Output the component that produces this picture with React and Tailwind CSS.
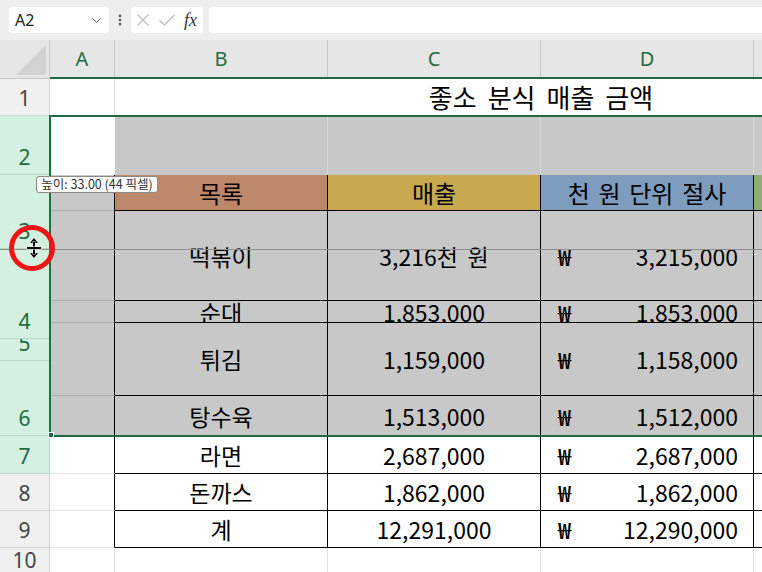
import { ChevronDown, EllipsisVertical } from 'lucide-react'

const KR = "font-['Noto_Sans_CJK_KR','Noto_Sans',sans-serif]"

const rowHeads = [
  { h: 'h-[37px]', label: '1' },
  { h: 'h-[59px]', label: '2', sel: true },
  { h: 'h-[74px]', label: '3', sel: true },
  { h: 'h-[90px]', label: '4', sel: true },
  { h: 'h-[22px]', label: '5', sel: true },
  { h: 'h-[75px]', label: '6', sel: true },
  { h: 'h-[38px]', label: '7', sel: true },
  { h: 'h-[37px]', label: '8' },
  { h: 'h-[37px]', label: '9' },
  { h: 'h-[30px]', label: '10' },
]

const items = [
  { h: 'h-[90px]', name: '떡볶이', sales: '3,216천 원', cut: '3,215,000', sel: true },
  { h: 'h-[22px]', name: '순대', sales: '1,853,000', cut: '1,853,000', sel: true },
  { h: 'h-[73px]', name: '튀김', sales: '1,159,000', cut: '1,158,000', sel: true },
  { h: 'h-[40px]', name: '탕수육', sales: '1,513,000', cut: '1,512,000', sel: true },
  { h: 'h-[38px]', name: '라면', sales: '2,687,000', cut: '2,687,000' },
  { h: 'h-[37px]', name: '돈까스', sales: '1,862,000', cut: '1,862,000' },
  { h: 'h-[37px]', name: '계', sales: '12,291,000', cut: '12,290,000' },
]

function RowHead({ h, label, sel }) {
  return (
    <div
      className={`${h} shrink-0 flex items-end justify-center overflow-hidden border-b border-r pb-[4px] text-[21px] leading-[26px] ${
        sel
          ? 'bg-[#d3f0e0] text-[#1e6b41] border-[#b6d8c4]'
          : 'bg-[#f0f0f0] text-[#444] border-[#d2d2d2]'
      }`}
    >
      {label}
    </div>
  )
}

function Cell({ w = 'w-[213px]', cls = '', children }) {
  return (
    <div className={`${w} shrink-0 flex items-center justify-center overflow-hidden ${cls}`}>
      {children}
    </div>
  )
}

function Toolbar() {
  return (
    <div className="h-[40px] bg-[#eeeeee] flex items-center pl-[9px] font-['Noto_Sans',sans-serif]">
      {/* Name box */}
      <div className="w-[100px] h-[26px] bg-white rounded-[4px] flex items-center justify-between pl-[6px] pr-[5px]">
        <span className="text-[16px] text-[#222]">A2</span>
        <ChevronDown size={15} strokeWidth={1.6} className="text-[#555]" />
      </div>
      <div className="w-[22px] flex justify-center">
        <EllipsisVertical size={14} strokeWidth={2.5} className="text-[#555]" />
      </div>
      {/* cancel / enter / fx */}
      <div className="w-[72px] h-[26px] bg-white rounded-[4px] flex items-center pl-[6px]">
        <svg width="12" height="12" viewBox="0 0 12 12" className="shrink-0">
          <path d="M0.5 0.5 L11.5 11.5 M11.5 0.5 L0.5 11.5" stroke="#bcbcbc" strokeWidth="1.2" fill="none" />
        </svg>
        <svg width="16" height="12" viewBox="0 0 16 12" className="ml-[10px] shrink-0">
          <path d="M0.5 6.5 L5.5 11 L15.5 1" stroke="#bcbcbc" strokeWidth="1.2" fill="none" />
        </svg>
        <span className="ml-[9px] text-[18px] italic text-[#333] font-['Liberation_Serif',serif] leading-none">
          fx
        </span>
      </div>
      <div className="ml-[6px] flex-1 h-[26px] bg-white rounded-l-[4px]" />
    </div>
  )
}

export default function App() {
  const GRID = 'border-[#e1e1e1]'
  return (
    <div className={`relative w-[762px] h-[572px] overflow-hidden bg-white ${KR}`}>
      <Toolbar />

      <div className="flex">
        {/* Row headers */}
        <div className="w-[50px] shrink-0 flex flex-col font-['Noto_Sans',sans-serif]">
          <div className="h-[39px] shrink-0 bg-[#e6e6e6] border-r border-b border-[#c8c8c8] relative">
            <svg width="50" height="39" viewBox="0 0 50 39" className="absolute left-0 top-0">
              <polygon points="16,35 46,35 46,5" fill="#d2d2d2" />
            </svg>
          </div>
          {rowHeads.map((r) => (
            <RowHead key={r.label} {...r} />
          ))}
        </div>

        {/* Cells */}
        <div className="flex-1 min-w-0 overflow-hidden flex flex-col">
          {/* Column headers */}
          <div className="h-[39px] shrink-0 flex bg-[#e6e6e6] border-b-2 border-[#1f6b43] text-[20px] text-[#1e6b41] font-['Noto_Sans',sans-serif]">
            <Cell w="w-[65px]" cls="border-r border-[#c6c6c6]">A</Cell>
            <Cell cls="border-r border-[#c6c6c6]">B</Cell>
            <Cell cls="border-r border-[#c6c6c6]">C</Cell>
            <Cell cls="border-r border-[#c6c6c6]">D</Cell>
            <Cell cls="border-r border-[#c6c6c6]">E</Cell>
          </div>

          {/* Row 1 - title */}
          <div className="h-[37px] shrink-0 flex text-[26px] leading-[32px] text-black">
            <Cell w="w-[65px]" cls={`border-r border-b ${GRID}`} />
            <Cell w="w-[852px]" cls={`border-b ${GRID} [word-spacing:0.2em]`}>
              좋소 분식 매출 금액
            </Cell>
          </div>

          {/* Row 2 */}
          <div className="h-[59px] shrink-0 flex">
            <Cell w="w-[65px]" cls="bg-white" />
            <Cell cls="bg-[#c8c8c8] border-r border-[#d9d9d9]" />
            <Cell cls="bg-[#c8c8c8] border-r border-[#d9d9d9]" />
            <Cell cls="bg-[#c8c8c8] border-r border-[#d9d9d9]" />
            <Cell cls="bg-[#c8c8c8] border-r border-[#d9d9d9]" />
          </div>

          {/* Header row */}
          <div className="h-[36px] shrink-0 flex text-[24px] leading-[30px] text-black [word-spacing:0.14em]">
            <Cell w="w-[65px]" cls="bg-[#c8c8c8] border-r border-b border-r-black border-b-[#adadad]" />
            <Cell cls="bg-[#bd8769] border-r border-b border-black">목록</Cell>
            <Cell cls="bg-[#c9a950] border-r border-b border-black">매출</Cell>
            <Cell cls="bg-[#7e9cbe] border-r border-b border-black">천 원 단위 절사</Cell>
            <Cell cls="bg-[#8cae6e] border-r border-b border-black" />
          </div>

          {/* Data rows */}
          {items.map((it) => (
            <div key={it.name} className={`${it.h} shrink-0 flex text-[23px] leading-[30px] text-black`}>
              <Cell
                w="w-[65px]"
                cls={`border-r border-b border-r-black ${it.sel ? 'bg-[#c8c8c8] border-b-[#adadad]' : 'bg-white border-b-[#e1e1e1]'}`}
              />
              <Cell cls={`border-r border-b border-black ${it.sel ? 'bg-[#c8c8c8]' : 'bg-white'}`}>{it.name}</Cell>
              <Cell cls={`border-r border-b border-black ${it.sel ? 'bg-[#c8c8c8]' : 'bg-white'}`}>
                <span className="[word-spacing:0.2em]">{it.sales}</span>
              </Cell>
              <Cell cls={`border-r border-b border-black justify-between! pl-[17px] pr-[15px] ${it.sel ? 'bg-[#c8c8c8]' : 'bg-white'}`}>
                <span className="font-medium">₩</span>
                <span>{it.cut}</span>
              </Cell>
              <Cell cls={`border-r border-b border-black ${it.sel ? 'bg-[#c8c8c8]' : 'bg-white'}`} />
            </div>
          ))}

          {/* Row 10 */}
          <div className="h-[30px] shrink-0 flex">
            <Cell w="w-[65px]" cls={`border-r ${GRID}`} />
            <Cell cls={`border-r ${GRID}`} />
            <Cell cls={`border-r ${GRID}`} />
            <Cell cls={`border-r ${GRID}`} />
            <Cell cls={`border-r ${GRID}`} />
          </div>
        </div>
      </div>

      {/* Selection outline */}
      <div className="absolute left-[49px] top-[115px] w-[760px] h-[322px] border-2 border-[#1f6b43]" />
      <div className="absolute left-[48px] top-[432px] w-[6px] h-[6px] bg-[#1f6b43] border border-white" />

      {/* Row resize guide */}
      <div className="absolute left-0 top-[249px] w-[762px] h-px bg-[#8f8f8f]" />

      {/* Height tooltip */}
      <div className="absolute left-[36px] top-[176px] w-[122px] h-[17px] bg-white border border-[#8a8a8a] rounded-[3px] flex items-center justify-center text-[12.5px] leading-none text-[#333]">
        높이: 33.00 (44 픽셀)
      </div>

      {/* Red highlight circle */}
      <div className="absolute left-[9px] top-[225px] w-[46px] h-[46px] rounded-full border-[5px] border-[#ee1515]" />

      {/* Resize cursor */}
      <svg width="20" height="22" viewBox="0 0 20 22" className="absolute left-[24px] top-[237px]">
        <g fill="#000" stroke="#fff" strokeWidth="1" paintOrder="stroke">
          <polygon points="10,1 6,6 14,6" />
          <polygon points="10,21 6,16 14,16" />
          <rect x="9" y="5" width="2" height="12" />
          <rect x="3" y="10" width="14" height="2" />
        </g>
      </svg>
    </div>
  )
}
